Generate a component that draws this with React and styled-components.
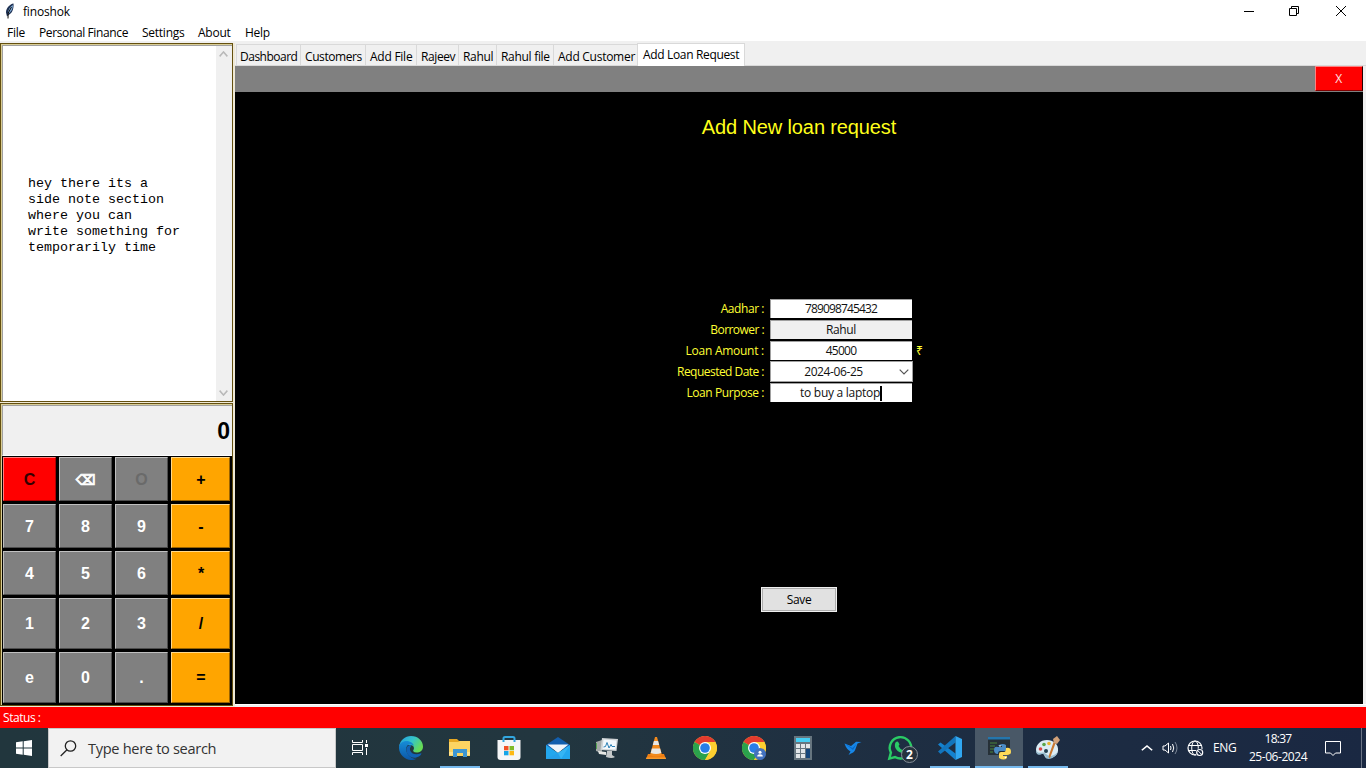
import React from "react";
import styled, { createGlobalStyle, css } from "styled-components";

const Global = createGlobalStyle`
  * { box-sizing: border-box; }
  body { margin: 0; overflow: hidden; background: #f0f0f0; }
  svg { display: block; }
`;

const ui = css`
  font-family: "Open Sans", "Noto Sans", sans-serif;
  font-size: 12px;
  letter-spacing: -0.34px;
  line-height: 16px;
  white-space: nowrap;
`;

const Label = styled.span`
  display: inline-block;
  white-space: pre;
  letter-spacing: ${(p) => p.$ls}px;
`;

const Window = styled.div`
  ${ui}
  width: 1366px;
  height: 768px;
  display: flex;
  flex-direction: column;
  background: #f0f0f0;
  color: #000;
`;

const TitleBar = styled.header`
  height: 22px;
  flex: none;
  display: flex;
  align-items: center;
  background: #fff;
  padding: 0 19px 0 5px;
`;
const AppTitle = styled.div`
  flex: 1;
  padding: 1px 0 0 6px;
`;
const WindowControls = styled.div`
  display: flex;
  gap: 34px;
  padding-bottom: 1px;
`;

const MenuBar = styled.nav`
  height: 19px;
  flex: none;
  display: flex;
  background: #fff;
  padding: 3px 0 0 7px;
`;
const MenuItem = styled.div`
  width: ${(p) => p.$w}px;
`;

const Body = styled.div`
  height: 666px;
  flex: none;
  display: flex;
  padding-top: 2px;
`;

const Sidebar = styled.aside`
  width: 235px;
  flex: none;
  display: flex;
  flex-direction: column;
  background: #efe9d6;
`;
const Frame = styled.section`
  width: 233px;
  height: ${(p) => p.$h}px;
  flex: none;
  border: 1px solid #64500f;
  display: flex;
  flex-direction: column;
  background: #d9cd96;
  padding: 1px 0 0 1px;
  margin-bottom: 1px;
`;
const Note = styled.div`
  flex: 1;
  display: flex;
  border-top: 1px solid #a0a0a0;
  border-left: 1px solid #a0a0a0;
  background: #fff;
`;
const NoteText = styled.pre`
  flex: 1;
  margin: 0;
  padding: 130px 0 0 25px;
  font-family: "Liberation Mono", monospace;
  font-size: 13.33px;
  letter-spacing: 0;
  line-height: 16px;
`;
const ScrollTrack = styled.div`
  width: 16px;
  background: #f0f0f0;
  display: flex;
  flex-direction: column;
  justify-content: space-between;
  align-items: center;
  padding: 5px 2px 5px 0;
`;

const Display = styled.div`
  height: 51px;
  flex: none;
  border: solid #a0a0a0;
  border-width: 1px 0 0 1px;
  border-bottom: 1px solid #fff;
  background: #f0f0f0;
  font: bold 23px/50px "Liberation Sans", sans-serif;
  letter-spacing: 0;
  text-align: right;
  padding-right: 2px;
`;
const Keys = styled.div`
  flex: 1;
  background: #000;
  display: grid;
  grid-template-columns: 53px 53px 53px 59px;
  grid-template-rows: 44px 44px 44px 51px 51px;
  gap: 3px;
  padding: 1px 0 0 1px;
`;
const tones = {
  gray: ["#808080", "#fff", "#c0c0c0", "#4d4d4d"],
  red: ["#ff0000", "#300", "#ff8080", "#b00000"],
  orange: ["#ffa500", "#000", "#ffd98c", "#996300"],
  off: ["#808080", "#6a6a6a", "#c0c0c0", "#4d4d4d"],
};
const Key = styled.div`
  background: ${(p) => tones[p.$tone][0]};
  color: ${(p) => tones[p.$tone][1]};
  border: 1px solid;
  border-color: ${(p) => {
    const [, , hi, lo] = tones[p.$tone];
    return `${hi} ${lo} ${lo} ${hi}`;
  }};
  display: flex;
  align-items: center;
  justify-content: center;
  font: bold ${(p) => (p.$small ? 14 : 16)}px/18px "Liberation Sans", "DejaVu Sans", sans-serif;
  letter-spacing: 0;
  -webkit-text-stroke: ${(p) => (p.$small ? 0.7 : 0)}px;
  padding: ${(p) => (p.$low ? 1 : 0)}px 0 0 ${(p) => (p.$tone === "orange" ? 1 : 0)}px;
`;

const Main = styled.main`
  flex: 1;
  display: flex;
  flex-direction: column;
`;
const Tabs = styled.div`
  height: 23px;
  flex: none;
  display: flex;
  align-items: flex-end;
  padding-left: 1px;
  border-bottom: 1px solid #d9d9d9;
`;
const Tab = styled.div`
  width: ${(p) => p.$w}px;
  height: ${(p) => (p.$on ? 23 : 21)}px;
  margin-bottom: ${(p) => (p.$on ? -1 : 0)}px;
  padding: ${(p) => (p.$on ? "3px 0 0 5px" : "4px 0 0 4px")};
  border: 1px solid #d9d9d9;
  border-bottom: 0;
  border-right-width: ${(p) => (p.$on ? 1 : 0)}px;
  background: ${(p) => (p.$on ? "#fff" : "#f0f0f0")};
  &:first-child {
    padding-left: 3px;
  }
`;
const Strip = styled.div`
  height: 26px;
  width: 1128px;
  flex: none;
  background: #808080;
  display: flex;
  justify-content: flex-end;
`;
const CloseTab = styled.div`
  width: 48px;
  height: 25px;
  background: #ff0000;
  border: 1px solid;
  border-color: #ff8080 #200 #800000 #ff8080;
  color: #ffe0e0;
  text-align: center;
  line-height: 23px;
  padding-right: 1px;
`;
const Panel = styled.div`
  height: 612px;
  width: 1128px;
  flex: none;
  background: #000;
  display: flex;
  flex-direction: column;
  align-items: center;
`;
const PanelEdge = styled.div`
  height: 1px;
  flex: none;
  background: #fff;
`;
const Heading = styled.h1`
  margin: 22px 0 0;
  height: 26px;
  font: 20px/26px "Liberation Sans", sans-serif;
  letter-spacing: -0.12px;
  color: #ffff1a;
`;
const Form = styled.div`
  width: 300px;
  height: 288px;
  margin-top: 159px;
`;
const Row = styled.div`
  height: 21px;
  display: flex;
  align-items: flex-start;
  color: #ffff33;
`;
const RowLabel = styled.div`
  width: 115px;
  text-align: right;
  padding: 2px 0 0 0;
  margin-right: 6px;
  letter-spacing: ${(p) => p.$ls}px;
`;
const Field = styled.div`
  width: 142px;
  height: 19px;
  background: ${(p) => (p.$off ? "#f0f0f0" : "#fff")};
  border: solid #a0a0a0;
  border-width: 1px 0 0 1px;
  padding-right: 1px;
  color: #111;
  display: flex;
  align-items: center;
  justify-content: center;
`;
const Combo = styled(Field)`
  width: 143px;
  height: 21px;
  margin-top: -1px;
  border-width: 1px;
  padding: 0 3px 0 0;
`;
const ComboValue = styled.div`
  flex: 1;
  text-align: center;
  padding-right: 3px;
`;
const Unit = styled.div`
  padding: 2px 0 0 4px;
`;
const Caret = styled.i`
  width: 2px;
  height: 15px;
  background: #000;
`;
const SaveButton = styled.div`
  width: 76px;
  height: 25px;
  background: #e1e1e1;
  border: 1px solid #f0f0f0;
  outline: 1px solid #adadad;
  outline-offset: -2px;
  text-align: center;
  line-height: 24px;
`;

const Status = styled.footer`
  height: 21px;
  flex: none;
  background: #ff0000;
  color: #fff;
  padding: 3px 0 0 3px;
`;

const Taskbar = styled.div`
  height: 40px;
  flex: none;
  display: flex;
  background: linear-gradient(90deg, #21363d 0%, #22363f 40%, #1e2e42 65%, #1a2842 100%);
  color: #fff;
`;
const Start = styled.div`
  width: 48px;
  padding: 12px 0 0 16px;
`;
const Search = styled.div`
  width: 288px;
  background: #f2f2f2;
  border: 1px solid #c8c8c8;
  display: flex;
  align-items: center;
  gap: 11px;
  padding: 0 0 0 11px;
  font-size: 14.6px;
  color: #333;
`;
const TaskView = styled.div`
  width: 51px;
  padding: 11px 0 0 15px;
`;
const TaskButton = styled.div`
  width: 48px;
  margin-right: 1px;
  height: 40px;
  display: flex;
  align-items: center;
  justify-content: center;
  background: ${(p) => (p.$active ? "#495867" : "transparent")};
  box-shadow: ${(p) => (p.$active ? "inset 0 -2px #76b9ed" : "none")};
`;
const OpenTaskButton = styled(TaskButton)`
  width: 40px;
  margin: 0 5px 0 4px;
  box-shadow: inset 0 -2px #76b9ed;
`;
const Tray = styled.div`
  flex: 1;
  display: flex;
  align-items: center;
  padding-left: 68px;
`;
const TrayGap = styled.div`
  width: ${(p) => p.$w}px;
`;
const Language = styled.div`
  width: 44px;
  padding-left: 9px;
`;
const Clock = styled.div`
  width: 60px;
  margin: 0 17px 0 0;
  text-align: center;
  line-height: 18px;
  padding-bottom: 1px;
`;
const ShowDesktop = styled.div`
  width: 5px;
  height: 40px;
  border-left: 1px solid #6b7485;
`;

const Svg = ({ w = 24, h = 24, vb, children, ...rest }) => (
  <svg width={w} height={h} viewBox={vb || `0 0 ${w} ${h}`} fill="none" {...rest}>
    {children}
  </svg>
);

const Feather = () => (
  <Svg w={12} h={16}>
    <path d="M8.500.5C5 1 1 5 1 9.500l1 4 1.500-1.500C7 10.500 9 6 8.500.5Z" fill="#1c2f52" />
    <path d="M8 2C5 4 3 6.500 3 11 6 9 8 6 8 2Z" fill="#83aed8" />
    <path d="M6.500 4 3.200 10 3 15.500" stroke="#111" />
  </Svg>
);

const Chevron = ({ up, color = "#b9b9b9", w = 9, sw = 1.7 }) => (
  <Svg w={w} h={6} vb="0 0 10 6" preserveAspectRatio="none">
    <path d={up ? "M.7 5.300 5 1l4.300 4.300" : "M.7.7 5 5 9.300.7"} stroke={color} strokeWidth={sw} />
  </Svg>
);

const Edge = () => (
  <Svg>
    <defs>
      <linearGradient id="e1" x1="0" y1="0" x2="1" y2=".5">
        <stop stopColor="#229be0" />
        <stop offset=".55" stopColor="#35c4c9" />
        <stop offset="1" stopColor="#67dc55" />
      </linearGradient>
      <linearGradient id="e2" x1="0" y1="0" x2="0" y2="1">
        <stop stopColor="#168dd7" />
        <stop offset="1" stopColor="#0c57a8" />
      </linearGradient>
    </defs>
    <path d="M0 11C1 4 6 0 12 0c7 0 12 5 12 10.500 0 4-3 6-6.500 6-3 0-4-1.500-3-2.700 1-1.400.6-4.800-3.500-4.800C6 9 1 8 0 11Z" fill="url(#e1)" />
    <path d="M0 12c0-5 4-7 7.500-7 4 0 7 2.500 7.500 5-1-1-2-1.500-4-1.500-3 0-4.500 3-3.500 7 1.500 5 7 8 10 7.200C10 27 0 20 0 12Z" fill="url(#e2)" />
    <path d="M11 9c-4 1-4.500 5-2.500 9 2.500 4 8 5 12 2 1.500-1 2.500-3 1.500-2.700-5 2.300-10 .7-11-3.300-.4-2 .7-3 1.500-4.500Z" fill="#1162b5" />
  </Svg>
);
const Explorer = () => (
  <Svg>
    <path d="M1 3h8l2 2h11v15H1Z" fill="#e6a722" />
    <path d="M1 6h9l2-1h10v15H1Z" fill="#fcd462" />
    <path d="M5 21v-8h14v8h-4v-4H9v4Z" fill="#3e97d3" />
    <path d="M1 16h4v3H1ZM19 16h3v3h-3Z" fill="#ffe391" />
  </Svg>
);
const Store = () => (
  <Svg>
    <path d="M.5 4h23v17q0 3-3 3h-17q-3 0-3-3Z" fill="#f5f6f7" />
    <path d="M6.500 6V2.500Q6.500 1 8 1h8q1.500 0 1.500 1.500V6" stroke="#32a7df" strokeWidth="2" />
    <path d="M7 10h4.500v4.300H7Z" fill="#f05125" />
    <path d="M12.500 10H17v4.300h-4.500Z" fill="#7fba26" />
    <path d="M7 15h4.500v4.300H7Z" fill="#16a6e8" />
    <path d="M12.500 15H17v4.300h-4.500Z" fill="#fdb913" />
  </Svg>
);
const Mail = () => (
  <Svg>
    <path d="M0 9 12 1l12 8v4H0Z" fill="#135fae" />
    <path d="M1.500 8.500h21L12 17Z" fill="#f1f6fb" />
    <path d="M0 9v14h24V9l-12 8Z" fill="#23a7ee" />
    <path d="M0 23h15l9-14-12 8Z" fill="#45c1fa" opacity=".55" />
    <path d="m0 23 12-6 3 6Z" fill="#168be0" opacity=".5" />
  </Svg>
);
const Monitor = () => (
  <Svg>
    <path d="m1 6 6-2v13l-6-2Z" fill="#a5aaa9" />
    <path d="M1 7h1v6H1Z" fill="#53a451" />
    <path d="m7 2 16 1-1.500 12-16-1Z" fill="#cfd3d5" />
    <path d="m8.500 3.500 13 1-1 9-13-.6Z" fill="#f3f8fc" />
    <path d="m8.500 11 2-.5 1.500-4 2 5.500 2-3.500 1 2 3 0" stroke="#2b80b5" />
    <path d="M12 15h5v4l3 2q-3 2-9 0Z" fill="#c5c9ca" />
    <path d="m3 15 8 1v3l-7-1Z" fill="#e7e8e5" />
  </Svg>
);
const Vlc = () => (
  <Svg>
    <path d="m4 18-2 5h20l-2-5Z" fill="#ed7d12" />
    <path d="M11 1h2l5 18q-6 3-12 0Z" fill="#f28a1c" />
    <path d="M9.900 5h4.200l1.100 4H8.800ZM7.900 12.500h8.200l1.200 4.500q-5 2-10.600 0Z" fill="#e9e8e5" />
    <path d="M2.500 21.500h19L22 23H2Z" fill="#f79b2c" />
  </Svg>
);
const ChromeArt = () => (
  <>
    <circle cx="12" cy="12" r="12" fill="#ffcc33" />
    <path d="M12 12 1.600 6A12 12 0 0 1 22.400 6Z" fill="#e33b2e" />
    <path d="M12 12 1.600 6A12 12 0 0 0 12 24l5.200-9Z" fill="#2ba24c" />
    <path d="M12 6h10.400q1.600 3 1.600 6c0 7-6 12-12 12l5.200-9Z" fill="#fdcf30" />
    <circle cx="12" cy="12" r="6" fill="#fff" />
    <circle cx="12" cy="12" r="4.800" fill="#287de8" />
  </>
);
const Chrome = () => (
  <Svg>
    <ChromeArt />
  </Svg>
);
const ChromeProfile = () => (
  <Svg>
    <ChromeArt />
    <circle cx="18" cy="18" r="6" fill="#4472bd" />
    <circle cx="18" cy="16.200" r="1.500" fill="#fff" />
    <path d="M15.200 20.500q0-2.200 2.800-2.200t2.800 2.200Z" fill="#fff" />
  </Svg>
);
const Calc = () => (
  <Svg>
    <path d="M3 0h18v24H3Z" fill="#66757f" />
    <path d="M5 2h14v4H5Z" fill="#46cdf2" />
    {[8, 13, 18].map((y) =>
      [5, 10, 15].map((x) => (
        <rect key={`${x}-${y}`} x={x} y={y} width="4" height="4" fill="#e1e5e8" />
      ))
    )}
    <path d="M15 13h4v9h-4Z" fill="#154579" />
  </Svg>
);
const Bird = () => (
  <Svg>
    <path d="M4.500 7.500 11 10l3-2.500 2-1.800 5.500.3-4 1.500-2 5.500c-1 3-3 4-4.500 4.500L8.500 19l2-3.500C8 14 6 12 4.500 7.500Z" fill="#1787e8" />
    <path d="m4.500 7.500 8 4.500 4-4-3.500 6Z" fill="#0869c9" />
  </Svg>
);
const WhatsApp = () => (
  <Svg w={34} h={30}>
    <path d="m5.300 25.600 1.600-6A10.700 10.700 0 1 1 11 24Z" stroke="#2acb65" strokeWidth="2.400" />
    <path d="M11.500 9.500q2-2 3 0l1 2-1 1.500q1.500 3 4 4l1.500-1.500 3 1.500q0 3-3 3c-6 .500-11-5.500-8.500-10.500Z" fill="#2acb65" />
    <circle cx="25.500" cy="21.500" r="8" fill="#26323d" stroke="#87909a" />
    <text x="25.300" y="26" textAnchor="middle" fill="#fff" fontSize="12" fontWeight="700" fontFamily="Open Sans">2</text>
  </Svg>
);
const VsCode = () => (
  <Svg>
    <path d="M17.500 17.500V24L0 8.500 2.500 6.500Z" fill="#1482cf" />
    <path d="M17.500 0v6.500L2.500 18 0 15.500Z" fill="#1275bd" />
    <path d="m17.500 0 6.500 3v18l-6.500 3Z" fill="#30a7f1" />
  </Svg>
);
const Python = () => (
  <Svg>
    <path d="M1 1h22v18H1Z" fill="#263037" />
    <path d="M1 1h22v2.500H1Z" fill="#2476ad" />
    <path d="M3 7h7M3 10h5M3 13h4M3 16h3" stroke="#3e6a3b" strokeWidth="1.500" />
    <path d="M12 9q4-2 7 0v6h-6q-2 0-2 3-4 0-4-4t4-3h4v-1h-4Z" fill="#4a8bc4" />
    <path d="M19 12q5-1 5 4 0 3-4 3h-4v1h4v2q-3 3-8 0v-4q0-2 2-2h3q2 0 2-4Z" fill="#ffdb58" />
    <circle cx="13" cy="10" r=".8" fill="#fff" />
    <circle cx="18.500" cy="21.500" r=".8" fill="#fff" />
  </Svg>
);
const Paint = () => (
  <Svg>
    <path d="M11 4C4 4 0 9 0 14c0 4 3 5 5 4 3-1 3 1 4 3 2 3 12 1 13-6C23 8 17 4 11 4Z" fill="#dcecf4" />
    <path d="M0 14c0 6 4 5 6 4s3 2 4 4 10 1 12-7c-2 4-8 7-12 3s-7 2-10-4Z" fill="#98bdd0" />
    <circle cx="4.500" cy="13" r="1.800" fill="#d94848" />
    <circle cx="8" cy="8.500" r="1.800" fill="#59a54a" />
    <circle cx="13" cy="7.500" r="1.800" fill="#eab42e" />
    <circle cx="10" cy="15" r="2" fill="#244252" />
    <path d="m20 6-6 16q-2 0-1-3l5-14Z" fill="#c97830" />
    <path d="M18 7 17 3l4-3 3 4-3 4Z" fill="#d2a179" />
  </Svg>
);

const SearchIcon = () => (
  <Svg w={17} h={17}>
    <circle cx="10.500" cy="6" r="5.200" stroke="#222" strokeWidth="1.300" />
    <path d="M7 9.800.7 16" stroke="#222" strokeWidth="1.300" />
  </Svg>
);
const Speaker = () => (
  <Svg w={17} h={14}>
    <path d="M1 5h2l3.500-3v10L3 9H1Z" stroke="#fff" />
    <path d="M8.500 5q1 2 0 4M10.500 3q2.500 4 0 8" stroke="#fff" />
    <path d="M13 1q4 6 0 12" stroke="#7c8798" />
  </Svg>
);
const Globe = () => (
  <Svg w={17} h={17}>
    <circle cx="8" cy="8" r="7" stroke="#fff" strokeWidth="1.200" />
    <ellipse cx="8" cy="8" rx="3.300" ry="7" stroke="#fff" />
    <path d="M1 5.500h14M1 10.500h10" stroke="#fff" />
    <circle cx="12.700" cy="12.500" r="4" fill="#1a2842" />
    <circle cx="12.700" cy="12.500" r="3" stroke="#fff" strokeWidth="1.200" />
    <path d="m10.700 10.500 4 4" stroke="#fff" />
  </Svg>
);

const menus = [["File", 32], ["Personal Finance", 103], ["Settings", 56], ["About", 47], ["Help", 40]];
const tabs = [["Dashboard", 64, -0.5], ["Customers", 65, -0.42], ["Add File", 51, -0.25], ["Rajeev", 42, -0.4], ["Rahul", 38, -0.3], ["Rahul file", 57, -0.3], ["Add Customer", 84, -0.27], ["Add Loan Request", 108, -0.34]];
const keys = [
  ["C", "red"], ["⌫", "gray"], ["O", "off"], ["+", "orange"],
  ["7", "gray"], ["8", "gray"], ["9", "gray"], ["-", "orange"],
  ["4", "gray"], ["5", "gray"], ["6", "gray"], ["*", "orange"],
  ["1", "gray"], ["2", "gray"], ["3", "gray"], ["/", "orange"],
  ["e", "gray"], ["0", "gray"], [".", "gray"], ["=", "orange"],
];
const apps = [
  [Edge], [Explorer, "open"], [Store], [Mail], [Monitor], [Vlc], [Chrome], [ChromeProfile],
  [Calc], [Bird], [WhatsApp], [VsCode, "open"], [Python, "active"], [Paint, "open"],
];
const note = `hey there its a
side note section
where you can
write something for
temporarily time`;

export default function App() {
  return (
    <Window>
      <Global />
      <TitleBar>
        <Feather />
        <AppTitle><Label $ls={-0.18}>finoshok</Label></AppTitle>
        <WindowControls>
          <Svg w={12} h={12}><path d="M1 6.500h10" stroke="#000" /></Svg>
          <Svg w={12} h={12}><path d="M.5 3.500h7v7h-7ZM2.500 3.500v-2h7v7h-2" stroke="#000" /></Svg>
          <Svg w={12} h={12}><path d="m1 1 10 10M11 1 1 11" stroke="#000" /></Svg>
        </WindowControls>
      </TitleBar>
      <MenuBar>
        {menus.map(([t, w]) => <MenuItem key={t} $w={w}><Label $ls={t === "Personal Finance" ? -0.38 : -0.25}>{t}</Label></MenuItem>)}
      </MenuBar>
      <Body>
        <Sidebar>
          <Frame $h={359}>
            <Note>
              <NoteText>{note}</NoteText>
              <ScrollTrack><Chevron up /><Chevron /></ScrollTrack>
            </Note>
          </Frame>
          <Frame $h={303}>
            <Display>0</Display>
            <Keys>
              {keys.map(([t, tone], i) => (
                <Key key={t} $tone={tone} $small={t === "⌫"} $low={i < 12}>{t}</Key>
              ))}
            </Keys>
          </Frame>
        </Sidebar>
        <Main>
          <Tabs>
            {tabs.map(([t, w, ls], i) => (
              <Tab key={t} $w={w} $on={i === 7}><Label $ls={ls}>{t}</Label></Tab>
            ))}
          </Tabs>
          <Strip><CloseTab>X</CloseTab></Strip>
          <Panel>
            <Heading>Add New loan request</Heading>
            <Form>
              <Row><RowLabel $ls={-0.44}>Aadhar :</RowLabel><Field><Label $ls={-0.85}>789098745432</Label></Field></Row>
              <Row><RowLabel $ls={-0.55}>Borrower :</RowLabel><Field $off>Rahul</Field></Row>
              <Row><RowLabel $ls={-0.26}>Loan Amount :</RowLabel><Field><Label $ls={-0.75}>45000</Label></Field><Unit>₹</Unit></Row>
              <Row>
                <RowLabel $ls={-0.53}>Requested Date :</RowLabel>
                <Combo><ComboValue><Label $ls={-0.4}>2024-06-25</Label></ComboValue><Chevron color="#555" w={10} sw={1.2} /></Combo>
              </Row>
              <Row><RowLabel $ls={-0.42}>Loan Purpose :</RowLabel><Field><Label $ls={-0.28}>to buy a laptop</Label><Caret /></Field></Row>
            </Form>
            <SaveButton>Save</SaveButton>
          </Panel>
          <PanelEdge />
        </Main>
      </Body>
      <Status><Label $ls={-0.45}>Status :</Label></Status>
      <Taskbar>
        <Start>
          <Svg w={16} h={16}>
            <path d="M0 2.300 6.700 1.300V7.500H0ZM7.700 1.200 16 0v7.500H7.700ZM0 8.500h6.700v6.200L0 13.700ZM7.700 8.500H16V16l-8.300-1.200Z" fill="#fff" />
          </Svg>
        </Start>
        <Search><SearchIcon /><Label $ls={-0.32}>Type here to search</Label></Search>
        <TaskView>
          <Svg w={18} h={18}>
            <path d="M1.500 1v2.500h10V1M1.500 16v-2.500h10V16M1.500 5.500h10v6h-10ZM15.500 1v3M15.500 9v7" stroke="#fff" />
            <path d="M14 5h3v3h-3Z" fill="#fff" />
          </Svg>
        </TaskView>
        {apps.map(([Icon, state], i) =>
          state === "open"
            ? <OpenTaskButton key={i}><Icon /></OpenTaskButton>
            : <TaskButton key={i} $active={state === "active"}><Icon /></TaskButton>
        )}
        <Tray>
          <Chevron up color="#fff" w={12} sw={1.3} />
          <TrayGap $w={9} />
          <Speaker />
          <TrayGap $w={8} />
          <Globe />
          <Language><Label $ls={-0.4}>ENG</Label></Language>
          <Clock><div><Label $ls={-0.75}>18:37</Label></div><div><Label $ls={-0.45}>25-06-2024</Label></div></Clock>
          <Svg w={16} h={17}>
            <path d="M.5 1.500h15v11.500h-5l-2.500 2.500-2.500-2.500h-5Z" stroke="#fff" />
          </Svg>
        </Tray>
        <ShowDesktop />
      </Taskbar>
    </Window>
  );
}
